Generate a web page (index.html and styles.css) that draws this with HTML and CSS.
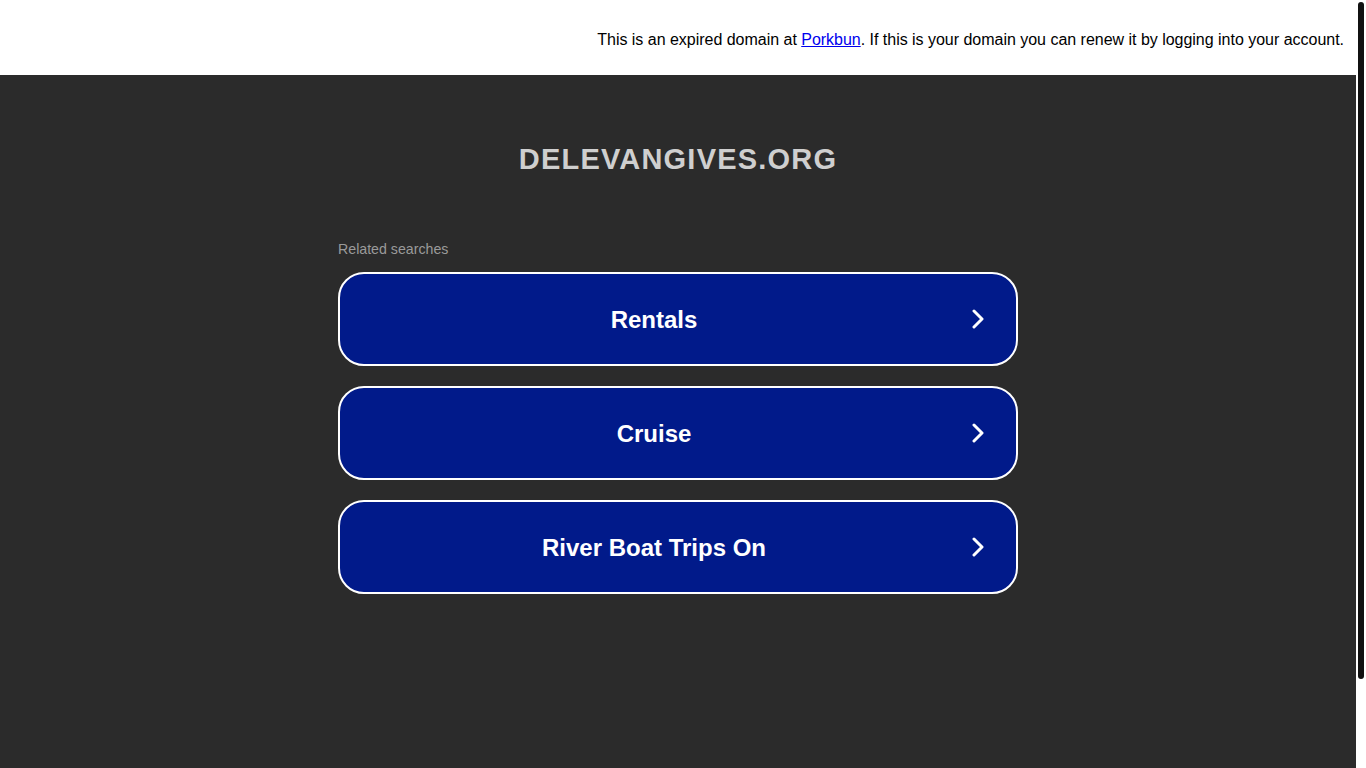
FILE: index.html
```html
<!DOCTYPE html>
<html>
<head>
<meta charset="utf-8">
<link rel="stylesheet" href="styles.css">
</head>
<body>
<div class="page">
  <div class="notice"><span>This is an expired domain at <a href="#">Porkbun</a>. If this is your domain you can renew it by logging into your account.</span></div>
  <main class="main">
    <h1 class="title">DELEVANGIVES.ORG</h1>
    <section class="related">
      <div class="label">Related searches</div>
      <a class="btn" href="#"><span class="btn-text">Rentals</span><svg class="chev" viewBox="0 0 12 20" width="12" height="20"><path d="M2 2 L10 10 L2 18" fill="none" stroke="#fff" stroke-width="3" stroke-linecap="round" stroke-linejoin="round"/></svg></a>
      <a class="btn" href="#"><span class="btn-text">Cruise</span><svg class="chev" viewBox="0 0 12 20" width="12" height="20"><path d="M2 2 L10 10 L2 18" fill="none" stroke="#fff" stroke-width="3" stroke-linecap="round" stroke-linejoin="round"/></svg></a>
      <a class="btn" href="#"><span class="btn-text">River Boat Trips On</span><svg class="chev" viewBox="0 0 12 20" width="12" height="20"><path d="M2 2 L10 10 L2 18" fill="none" stroke="#fff" stroke-width="3" stroke-linecap="round" stroke-linejoin="round"/></svg></a>
    </section>
  </main>
</div>
<div class="scrollbar"><div class="thumb"></div></div>
</body>
</html>
```
FILE: styles.css
```css
html, body { height: 100%; }
body {
  margin: 0;
  font-family: "Liberation Sans", Arial, sans-serif;
  background: #2b2b2b;
  display: flex;
  overflow: hidden;
}
.page {
  flex: 1;
  display: flex;
  flex-direction: column;
}
.scrollbar {
  width: 10px;
  background: #fff;
  padding: 2px 2px 0;
  box-sizing: border-box;
}
.thumb {
  width: 6px;
  height: 677px;
  background: #111;
  border-radius: 3px;
}
.notice {
  background: #fff;
  color: #000;
  height: 75px;
  box-sizing: border-box;
  padding: 4px 12px 0 0;
  display: flex;
  align-items: center;
  justify-content: flex-end;
  font-size: 16px;
  letter-spacing: -0.02px;
}
.notice a { color: #00e; text-decoration: underline; }
.main {
  display: flex;
  flex-direction: column;
  align-items: center;
}
.title {
  margin: 66px 0 0;
  font-size: 29px;
  font-weight: bold;
  letter-spacing: 1.2px;
  color: #cfcfcf;
  line-height: 36px;
}
.related {
  width: 680px;
  margin-top: 64px;
  display: flex;
  flex-direction: column;
  gap: 20px;
}
.label {
  font-size: 14.2px;
  color: #9a9a9a;
  line-height: 16px;
  margin-bottom: -5px;
}
.btn {
  height: 94px;
  box-sizing: border-box;
  border: 2px solid #fff;
  border-radius: 26px;
  background: #011a8a;
  display: flex;
  align-items: center;
  text-decoration: none;
  color: #fff;
  padding-right: 32px;
}
.btn-text {
  flex: 1;
  text-align: center;
  font-size: 24px;
  font-weight: bold;
  padding-top: 2px;
}
.chev { display: block; margin-left: 4px; }
```
